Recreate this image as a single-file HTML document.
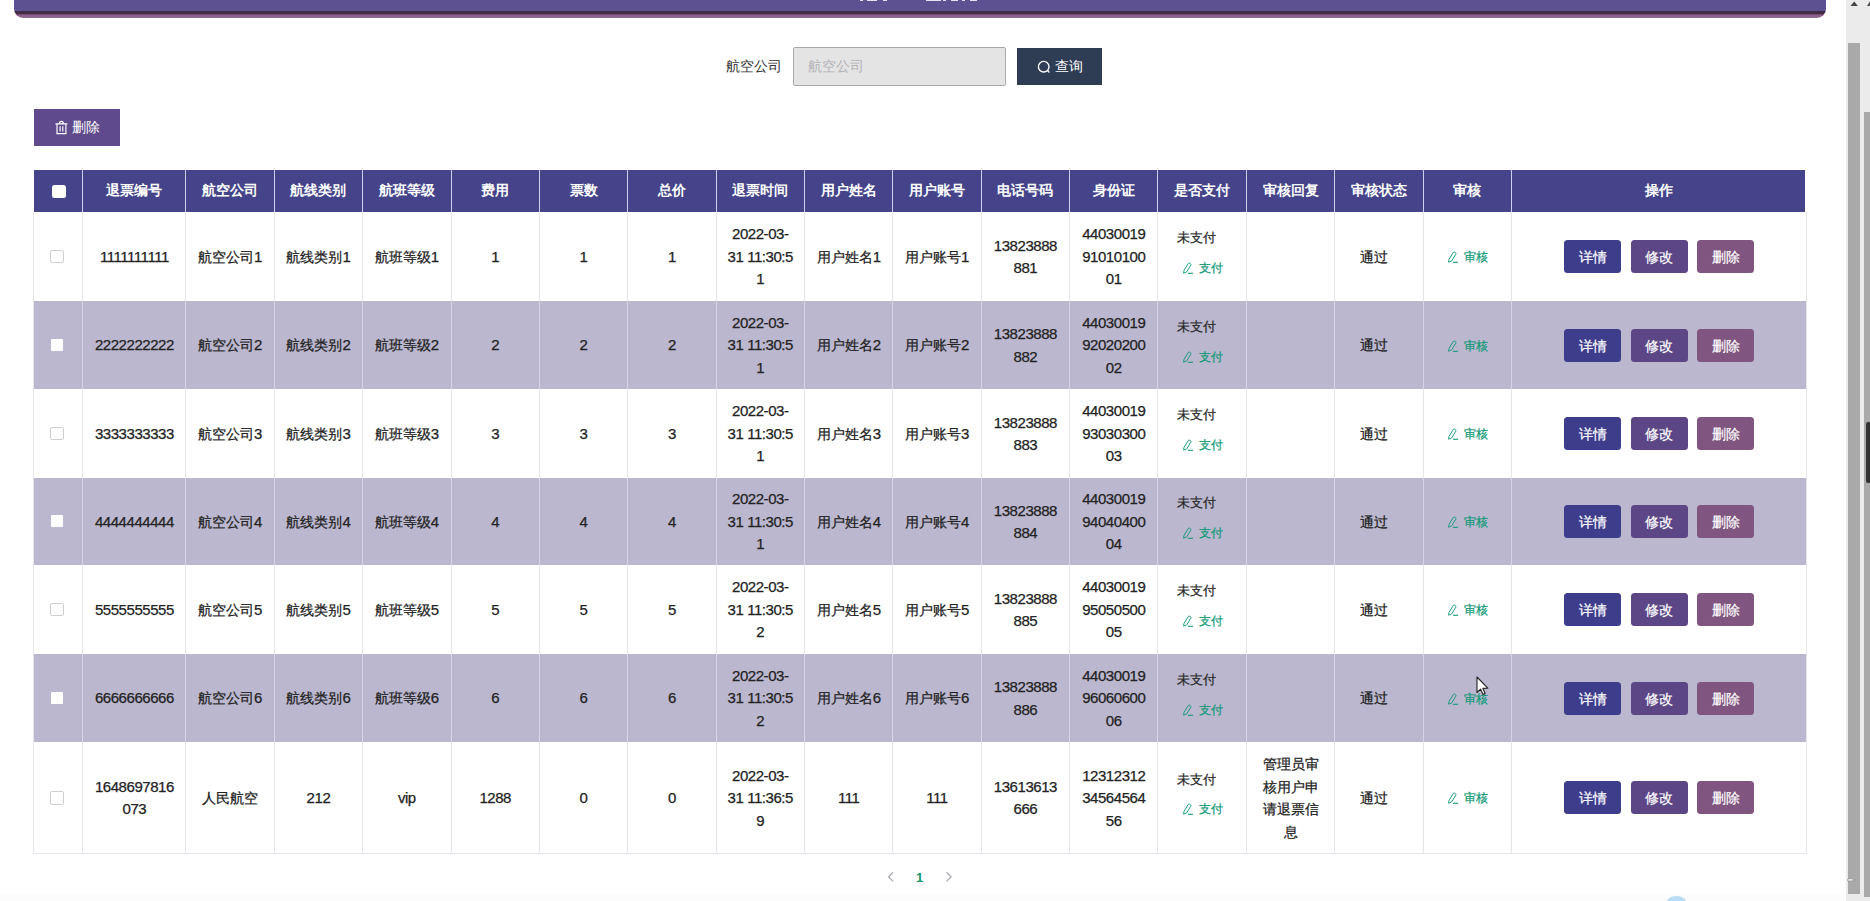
<!DOCTYPE html>
<html><head><meta charset="utf-8"><style>
html,body{margin:0;padding:0;}
body{width:1870px;height:901px;overflow:hidden;position:relative;background:#fff;font-family:"Liberation Sans", sans-serif;}
.t{position:absolute;text-align:center;font-size:14.2px;line-height:22.5px;color:#222;white-space:nowrap;-webkit-text-stroke-width:0.25px;}
.d{font-size:15px;letter-spacing:-0.44px;}
.btn{position:absolute;width:57px;height:33px;border-radius:3.5px;color:#fff;font-size:13.6px;line-height:35px;text-align:center;font-weight:500;-webkit-text-stroke-width:0.2px;}
</style></head><body>
<div style="position:absolute;left:14px;top:0;width:1812px;height:17.5px;border-radius:0 0 9px 9px;background:linear-gradient(to bottom,#5d5191 0,#5d5191 10.6px,#3f2c47 11.2px,#452b48 14px,#8b5f8c 14.8px,#8e6a8e 17.5px)"></div>
<div style="position:absolute;left:860px;top:0;width:3px;height:1px;background:#e6e2f2"></div>
<div style="position:absolute;left:867px;top:0;width:10px;height:1px;background:#e6e2f2"></div>
<div style="position:absolute;left:883px;top:0;width:4px;height:1px;background:#e6e2f2"></div>
<div style="position:absolute;left:926px;top:0;width:15px;height:1px;background:#e6e2f2"></div>
<div style="position:absolute;left:943px;top:0;width:3px;height:1px;background:#e6e2f2"></div>
<div style="position:absolute;left:951px;top:0;width:7px;height:1px;background:#e6e2f2"></div>
<div style="position:absolute;left:962px;top:0;width:3px;height:1px;background:#e6e2f2"></div>
<div style="position:absolute;left:970px;top:0;width:7px;height:1px;background:#e6e2f2"></div>

<div style="position:absolute;left:726px;top:55.55px;font-size:13.8px;line-height:22.5px;color:#333;white-space:nowrap">航空公司</div>
<div style="position:absolute;left:793px;top:47px;width:211px;height:37px;border:1px solid #a9a9a9;border-radius:2px;background:#e4e4e4"></div>
<div style="position:absolute;left:808px;top:55.55px;font-size:13.8px;line-height:22.5px;color:#b3b3b8;white-space:nowrap">航空公司</div>
<div style="position:absolute;left:1017px;top:48px;width:85px;height:37px;background:#2e3c54"></div>
<svg width="14" height="14" viewBox="0 0 14 14" style="position:absolute;left:1036.5px;top:59.5px"><circle cx="6.7" cy="6.7" r="5.3" fill="none" stroke="#fff" stroke-width="1.35"/><path d="M10.5 10.5 L12.4 12.4" stroke="#fff" stroke-width="1.35"/></svg>
<div style="position:absolute;left:1055px;top:56.25px;font-size:13.8px;line-height:22.5px;color:#fff;white-space:nowrap">查询</div>

<div style="position:absolute;left:34px;top:109px;width:86px;height:37px;background:#5e4a8d"></div>
<svg width="15" height="16" viewBox="0 0 15 16" style="position:absolute;left:53.5px;top:119.5px"><path d="M1.4 3.9 H13.4 M5.4 3.9 Q5.4 1.3 7.4 1.3 Q9.4 1.3 9.4 3.9 M3 3.9 V13.6 H11.9 V3.9 M6.1 6.2 V11.4 M8.8 6.2 V11.4" fill="none" stroke="#fff" stroke-width="1.15"/></svg>
<div style="position:absolute;left:72px;top:116.55px;font-size:13.5px;line-height:22.5px;color:#fff;white-space:nowrap">删除</div>

<div style="position:absolute;left:0;top:894px;width:1846px;height:7px;background:#fcfcfc"></div>
<div style="position:absolute;left:34px;top:170px;width:1771px;height:42px;background:#45448a"></div>
<div style="position:absolute;left:82px;top:170px;width:1px;height:42px;background:#cdcef0"></div>
<div style="position:absolute;left:185px;top:170px;width:1px;height:42px;background:#cdcef0"></div>
<div style="position:absolute;left:274px;top:170px;width:1px;height:42px;background:#cdcef0"></div>
<div style="position:absolute;left:362px;top:170px;width:1px;height:42px;background:#cdcef0"></div>
<div style="position:absolute;left:451px;top:170px;width:1px;height:42px;background:#cdcef0"></div>
<div style="position:absolute;left:539px;top:170px;width:1px;height:42px;background:#cdcef0"></div>
<div style="position:absolute;left:627px;top:170px;width:1px;height:42px;background:#cdcef0"></div>
<div style="position:absolute;left:716px;top:170px;width:1px;height:42px;background:#cdcef0"></div>
<div style="position:absolute;left:804px;top:170px;width:1px;height:42px;background:#cdcef0"></div>
<div style="position:absolute;left:892px;top:170px;width:1px;height:42px;background:#cdcef0"></div>
<div style="position:absolute;left:981px;top:170px;width:1px;height:42px;background:#cdcef0"></div>
<div style="position:absolute;left:1069px;top:170px;width:1px;height:42px;background:#cdcef0"></div>
<div style="position:absolute;left:1157px;top:170px;width:1px;height:42px;background:#cdcef0"></div>
<div style="position:absolute;left:1246px;top:170px;width:1px;height:42px;background:#cdcef0"></div>
<div style="position:absolute;left:1334px;top:170px;width:1px;height:42px;background:#cdcef0"></div>
<div style="position:absolute;left:1423px;top:170px;width:1px;height:42px;background:#cdcef0"></div>
<div style="position:absolute;left:1511px;top:170px;width:1px;height:42px;background:#cdcef0"></div>
<div style="position:absolute;left:52px;top:184.5px;width:13.5px;height:13.5px;background:#fff;border-radius:2.5px"></div>
<div class="t" style="left:82.90px;top:180.35px;width:103.00px;color:#fff;font-weight:bold;font-size:13.8px;-webkit-text-stroke-width:0">退票编号</div>
<div class="t" style="left:185.90px;top:180.35px;width:88.37px;color:#fff;font-weight:bold;font-size:13.8px;-webkit-text-stroke-width:0">航空公司</div>
<div class="t" style="left:274.27px;top:180.35px;width:88.37px;color:#fff;font-weight:bold;font-size:13.8px;-webkit-text-stroke-width:0">航线类别</div>
<div class="t" style="left:362.64px;top:180.35px;width:88.37px;color:#fff;font-weight:bold;font-size:13.8px;-webkit-text-stroke-width:0">航班等级</div>
<div class="t" style="left:451.01px;top:180.35px;width:88.37px;color:#fff;font-weight:bold;font-size:13.8px;-webkit-text-stroke-width:0">费用</div>
<div class="t" style="left:539.38px;top:180.35px;width:88.37px;color:#fff;font-weight:bold;font-size:13.8px;-webkit-text-stroke-width:0">票数</div>
<div class="t" style="left:627.75px;top:180.35px;width:88.37px;color:#fff;font-weight:bold;font-size:13.8px;-webkit-text-stroke-width:0">总价</div>
<div class="t" style="left:716.12px;top:180.35px;width:88.37px;color:#fff;font-weight:bold;font-size:13.8px;-webkit-text-stroke-width:0">退票时间</div>
<div class="t" style="left:804.49px;top:180.35px;width:88.37px;color:#fff;font-weight:bold;font-size:13.8px;-webkit-text-stroke-width:0">用户姓名</div>
<div class="t" style="left:892.86px;top:180.35px;width:88.37px;color:#fff;font-weight:bold;font-size:13.8px;-webkit-text-stroke-width:0">用户账号</div>
<div class="t" style="left:981.23px;top:180.35px;width:88.37px;color:#fff;font-weight:bold;font-size:13.8px;-webkit-text-stroke-width:0">电话号码</div>
<div class="t" style="left:1069.60px;top:180.35px;width:88.37px;color:#fff;font-weight:bold;font-size:13.8px;-webkit-text-stroke-width:0">身份证</div>
<div class="t" style="left:1157.97px;top:180.35px;width:88.37px;color:#fff;font-weight:bold;font-size:13.8px;-webkit-text-stroke-width:0">是否支付</div>
<div class="t" style="left:1246.34px;top:180.35px;width:88.37px;color:#fff;font-weight:bold;font-size:13.8px;-webkit-text-stroke-width:0">审核回复</div>
<div class="t" style="left:1334.71px;top:180.35px;width:88.37px;color:#fff;font-weight:bold;font-size:13.8px;-webkit-text-stroke-width:0">审核状态</div>
<div class="t" style="left:1423.08px;top:180.35px;width:88.37px;color:#fff;font-weight:bold;font-size:13.8px;-webkit-text-stroke-width:0">审核</div>
<div class="t" style="left:1511.45px;top:180.35px;width:294.55px;color:#fff;font-weight:bold;font-size:13.8px;-webkit-text-stroke-width:0">操作</div>
<div style="position:absolute;left:34px;top:212.00px;width:1772px;height:89.00px;background:#ffffff"></div>
<div style="position:absolute;left:50px;top:249.70px;width:11.6px;height:11.6px;border:1px solid #cfcfcf;border-radius:2px;background:#fff"></div>
<div class="t" style="left:82.90px;top:245.95px;width:103.00px"><span class="d">1111111111</span></div>
<div class="t" style="left:185.90px;top:245.95px;width:88.37px">航空公司<span class="d">1</span></div>
<div class="t" style="left:274.27px;top:245.95px;width:88.37px">航线类别<span class="d">1</span></div>
<div class="t" style="left:362.64px;top:245.95px;width:88.37px">航班等级<span class="d">1</span></div>
<div class="t" style="left:451.01px;top:245.95px;width:88.37px"><span class="d">1</span></div>
<div class="t" style="left:539.38px;top:245.95px;width:88.37px"><span class="d">1</span></div>
<div class="t" style="left:627.75px;top:245.95px;width:88.37px"><span class="d">1</span></div>
<div class="t" style="left:716.12px;top:223.45px;width:88.37px"><span class="d">2022-03-</span><br><span class="d">31 11:30:5</span><br><span class="d">1</span></div>
<div class="t" style="left:804.49px;top:245.95px;width:88.37px">用户姓名<span class="d">1</span></div>
<div class="t" style="left:892.86px;top:245.95px;width:88.37px">用户账号<span class="d">1</span></div>
<div class="t" style="left:981.23px;top:234.70px;width:88.37px"><span class="d">13823888</span><br><span class="d">881</span></div>
<div class="t" style="left:1069.60px;top:223.45px;width:88.37px"><span class="d">44030019</span><br><span class="d">91010100</span><br><span class="d">01</span></div>
<div class="t" style="left:1176.5px;top:227.45px;font-size:13.4px;color:#2a2a2a;text-align:left">未支付</div>
<svg width="12" height="12" viewBox="0 0 12 12" style="position:absolute;left:1181.80px;top:262.00px"><path d="M1.6 11.2 L2 8.4 L6.2 1.6 Q6.9 0.7 7.8 1.2 L8.5 1.7 Q9.3 2.3 8.8 3.2 L4.6 10 Z" fill="none" stroke="#139a78" stroke-width="0.95"/><path d="M5.9 11.3 H11" stroke="#139a78" stroke-width="1.1"/></svg>
<div class="t" style="left:1198.6px;top:257.05px;font-size:11.6px;color:#139a78;text-align:left">支付</div>
<div class="t" style="left:1329.71px;top:245.95px;width:88.37px">通过</div>
<svg width="12" height="12" viewBox="0 0 12 12" style="position:absolute;left:1447.00px;top:251.20px"><path d="M1.6 11.2 L2 8.4 L6.2 1.6 Q6.9 0.7 7.8 1.2 L8.5 1.7 Q9.3 2.3 8.8 3.2 L4.6 10 Z" fill="none" stroke="#139a78" stroke-width="0.95"/><path d="M5.9 11.3 H11" stroke="#139a78" stroke-width="1.1"/></svg>
<div class="t" style="left:1464.3px;top:246.05px;font-size:11.6px;color:#139a78;text-align:left">审核</div>
<div class="btn" style="left:1564px;top:240.00px;background:#3e3d8b">详情</div>
<div class="btn" style="left:1630.5px;top:240.00px;background:#5c4686">修改</div>
<div class="btn" style="left:1697px;top:240.00px;background:#805681">删除</div>
<div style="position:absolute;left:34px;top:301.00px;width:1772px;height:88.00px;background:#bbb7cf"></div>
<div style="position:absolute;left:50.5px;top:338.50px;width:12px;height:12px;background:#fff;border-radius:1px"></div>
<div class="t" style="left:82.90px;top:334.45px;width:103.00px"><span class="d">2222222222</span></div>
<div class="t" style="left:185.90px;top:334.45px;width:88.37px">航空公司<span class="d">2</span></div>
<div class="t" style="left:274.27px;top:334.45px;width:88.37px">航线类别<span class="d">2</span></div>
<div class="t" style="left:362.64px;top:334.45px;width:88.37px">航班等级<span class="d">2</span></div>
<div class="t" style="left:451.01px;top:334.45px;width:88.37px"><span class="d">2</span></div>
<div class="t" style="left:539.38px;top:334.45px;width:88.37px"><span class="d">2</span></div>
<div class="t" style="left:627.75px;top:334.45px;width:88.37px"><span class="d">2</span></div>
<div class="t" style="left:716.12px;top:311.95px;width:88.37px"><span class="d">2022-03-</span><br><span class="d">31 11:30:5</span><br><span class="d">1</span></div>
<div class="t" style="left:804.49px;top:334.45px;width:88.37px">用户姓名<span class="d">2</span></div>
<div class="t" style="left:892.86px;top:334.45px;width:88.37px">用户账号<span class="d">2</span></div>
<div class="t" style="left:981.23px;top:323.20px;width:88.37px"><span class="d">13823888</span><br><span class="d">882</span></div>
<div class="t" style="left:1069.60px;top:311.95px;width:88.37px"><span class="d">44030019</span><br><span class="d">92020200</span><br><span class="d">02</span></div>
<div class="t" style="left:1176.5px;top:315.95px;font-size:13.4px;color:#2a2a2a;text-align:left">未支付</div>
<svg width="12" height="12" viewBox="0 0 12 12" style="position:absolute;left:1181.80px;top:350.50px"><path d="M1.6 11.2 L2 8.4 L6.2 1.6 Q6.9 0.7 7.8 1.2 L8.5 1.7 Q9.3 2.3 8.8 3.2 L4.6 10 Z" fill="none" stroke="#139a78" stroke-width="0.95"/><path d="M5.9 11.3 H11" stroke="#139a78" stroke-width="1.1"/></svg>
<div class="t" style="left:1198.6px;top:345.55px;font-size:11.6px;color:#139a78;text-align:left">支付</div>
<div class="t" style="left:1329.71px;top:334.45px;width:88.37px">通过</div>
<svg width="12" height="12" viewBox="0 0 12 12" style="position:absolute;left:1447.00px;top:339.70px"><path d="M1.6 11.2 L2 8.4 L6.2 1.6 Q6.9 0.7 7.8 1.2 L8.5 1.7 Q9.3 2.3 8.8 3.2 L4.6 10 Z" fill="none" stroke="#139a78" stroke-width="0.95"/><path d="M5.9 11.3 H11" stroke="#139a78" stroke-width="1.1"/></svg>
<div class="t" style="left:1464.3px;top:334.55px;font-size:11.6px;color:#139a78;text-align:left">审核</div>
<div class="btn" style="left:1564px;top:328.50px;background:#3e3d8b">详情</div>
<div class="btn" style="left:1630.5px;top:328.50px;background:#5c4686">修改</div>
<div class="btn" style="left:1697px;top:328.50px;background:#805681">删除</div>
<div style="position:absolute;left:34px;top:389.00px;width:1772px;height:89.00px;background:#ffffff"></div>
<div style="position:absolute;left:50px;top:426.70px;width:11.6px;height:11.6px;border:1px solid #cfcfcf;border-radius:2px;background:#fff"></div>
<div class="t" style="left:82.90px;top:422.95px;width:103.00px"><span class="d">3333333333</span></div>
<div class="t" style="left:185.90px;top:422.95px;width:88.37px">航空公司<span class="d">3</span></div>
<div class="t" style="left:274.27px;top:422.95px;width:88.37px">航线类别<span class="d">3</span></div>
<div class="t" style="left:362.64px;top:422.95px;width:88.37px">航班等级<span class="d">3</span></div>
<div class="t" style="left:451.01px;top:422.95px;width:88.37px"><span class="d">3</span></div>
<div class="t" style="left:539.38px;top:422.95px;width:88.37px"><span class="d">3</span></div>
<div class="t" style="left:627.75px;top:422.95px;width:88.37px"><span class="d">3</span></div>
<div class="t" style="left:716.12px;top:400.45px;width:88.37px"><span class="d">2022-03-</span><br><span class="d">31 11:30:5</span><br><span class="d">1</span></div>
<div class="t" style="left:804.49px;top:422.95px;width:88.37px">用户姓名<span class="d">3</span></div>
<div class="t" style="left:892.86px;top:422.95px;width:88.37px">用户账号<span class="d">3</span></div>
<div class="t" style="left:981.23px;top:411.70px;width:88.37px"><span class="d">13823888</span><br><span class="d">883</span></div>
<div class="t" style="left:1069.60px;top:400.45px;width:88.37px"><span class="d">44030019</span><br><span class="d">93030300</span><br><span class="d">03</span></div>
<div class="t" style="left:1176.5px;top:404.45px;font-size:13.4px;color:#2a2a2a;text-align:left">未支付</div>
<svg width="12" height="12" viewBox="0 0 12 12" style="position:absolute;left:1181.80px;top:439.00px"><path d="M1.6 11.2 L2 8.4 L6.2 1.6 Q6.9 0.7 7.8 1.2 L8.5 1.7 Q9.3 2.3 8.8 3.2 L4.6 10 Z" fill="none" stroke="#139a78" stroke-width="0.95"/><path d="M5.9 11.3 H11" stroke="#139a78" stroke-width="1.1"/></svg>
<div class="t" style="left:1198.6px;top:434.05px;font-size:11.6px;color:#139a78;text-align:left">支付</div>
<div class="t" style="left:1329.71px;top:422.95px;width:88.37px">通过</div>
<svg width="12" height="12" viewBox="0 0 12 12" style="position:absolute;left:1447.00px;top:428.20px"><path d="M1.6 11.2 L2 8.4 L6.2 1.6 Q6.9 0.7 7.8 1.2 L8.5 1.7 Q9.3 2.3 8.8 3.2 L4.6 10 Z" fill="none" stroke="#139a78" stroke-width="0.95"/><path d="M5.9 11.3 H11" stroke="#139a78" stroke-width="1.1"/></svg>
<div class="t" style="left:1464.3px;top:423.05px;font-size:11.6px;color:#139a78;text-align:left">审核</div>
<div class="btn" style="left:1564px;top:417.00px;background:#3e3d8b">详情</div>
<div class="btn" style="left:1630.5px;top:417.00px;background:#5c4686">修改</div>
<div class="btn" style="left:1697px;top:417.00px;background:#805681">删除</div>
<div style="position:absolute;left:34px;top:478.00px;width:1772px;height:87.00px;background:#bbb7cf"></div>
<div style="position:absolute;left:50.5px;top:515.00px;width:12px;height:12px;background:#fff;border-radius:1px"></div>
<div class="t" style="left:82.90px;top:510.95px;width:103.00px"><span class="d">4444444444</span></div>
<div class="t" style="left:185.90px;top:510.95px;width:88.37px">航空公司<span class="d">4</span></div>
<div class="t" style="left:274.27px;top:510.95px;width:88.37px">航线类别<span class="d">4</span></div>
<div class="t" style="left:362.64px;top:510.95px;width:88.37px">航班等级<span class="d">4</span></div>
<div class="t" style="left:451.01px;top:510.95px;width:88.37px"><span class="d">4</span></div>
<div class="t" style="left:539.38px;top:510.95px;width:88.37px"><span class="d">4</span></div>
<div class="t" style="left:627.75px;top:510.95px;width:88.37px"><span class="d">4</span></div>
<div class="t" style="left:716.12px;top:488.45px;width:88.37px"><span class="d">2022-03-</span><br><span class="d">31 11:30:5</span><br><span class="d">1</span></div>
<div class="t" style="left:804.49px;top:510.95px;width:88.37px">用户姓名<span class="d">4</span></div>
<div class="t" style="left:892.86px;top:510.95px;width:88.37px">用户账号<span class="d">4</span></div>
<div class="t" style="left:981.23px;top:499.70px;width:88.37px"><span class="d">13823888</span><br><span class="d">884</span></div>
<div class="t" style="left:1069.60px;top:488.45px;width:88.37px"><span class="d">44030019</span><br><span class="d">94040400</span><br><span class="d">04</span></div>
<div class="t" style="left:1176.5px;top:492.45px;font-size:13.4px;color:#2a2a2a;text-align:left">未支付</div>
<svg width="12" height="12" viewBox="0 0 12 12" style="position:absolute;left:1181.80px;top:527.00px"><path d="M1.6 11.2 L2 8.4 L6.2 1.6 Q6.9 0.7 7.8 1.2 L8.5 1.7 Q9.3 2.3 8.8 3.2 L4.6 10 Z" fill="none" stroke="#139a78" stroke-width="0.95"/><path d="M5.9 11.3 H11" stroke="#139a78" stroke-width="1.1"/></svg>
<div class="t" style="left:1198.6px;top:522.05px;font-size:11.6px;color:#139a78;text-align:left">支付</div>
<div class="t" style="left:1329.71px;top:510.95px;width:88.37px">通过</div>
<svg width="12" height="12" viewBox="0 0 12 12" style="position:absolute;left:1447.00px;top:516.20px"><path d="M1.6 11.2 L2 8.4 L6.2 1.6 Q6.9 0.7 7.8 1.2 L8.5 1.7 Q9.3 2.3 8.8 3.2 L4.6 10 Z" fill="none" stroke="#139a78" stroke-width="0.95"/><path d="M5.9 11.3 H11" stroke="#139a78" stroke-width="1.1"/></svg>
<div class="t" style="left:1464.3px;top:511.05px;font-size:11.6px;color:#139a78;text-align:left">审核</div>
<div class="btn" style="left:1564px;top:505.00px;background:#3e3d8b">详情</div>
<div class="btn" style="left:1630.5px;top:505.00px;background:#5c4686">修改</div>
<div class="btn" style="left:1697px;top:505.00px;background:#805681">删除</div>
<div style="position:absolute;left:34px;top:565.00px;width:1772px;height:89.00px;background:#ffffff"></div>
<div style="position:absolute;left:50px;top:602.70px;width:11.6px;height:11.6px;border:1px solid #cfcfcf;border-radius:2px;background:#fff"></div>
<div class="t" style="left:82.90px;top:598.95px;width:103.00px"><span class="d">5555555555</span></div>
<div class="t" style="left:185.90px;top:598.95px;width:88.37px">航空公司<span class="d">5</span></div>
<div class="t" style="left:274.27px;top:598.95px;width:88.37px">航线类别<span class="d">5</span></div>
<div class="t" style="left:362.64px;top:598.95px;width:88.37px">航班等级<span class="d">5</span></div>
<div class="t" style="left:451.01px;top:598.95px;width:88.37px"><span class="d">5</span></div>
<div class="t" style="left:539.38px;top:598.95px;width:88.37px"><span class="d">5</span></div>
<div class="t" style="left:627.75px;top:598.95px;width:88.37px"><span class="d">5</span></div>
<div class="t" style="left:716.12px;top:576.45px;width:88.37px"><span class="d">2022-03-</span><br><span class="d">31 11:30:5</span><br><span class="d">2</span></div>
<div class="t" style="left:804.49px;top:598.95px;width:88.37px">用户姓名<span class="d">5</span></div>
<div class="t" style="left:892.86px;top:598.95px;width:88.37px">用户账号<span class="d">5</span></div>
<div class="t" style="left:981.23px;top:587.70px;width:88.37px"><span class="d">13823888</span><br><span class="d">885</span></div>
<div class="t" style="left:1069.60px;top:576.45px;width:88.37px"><span class="d">44030019</span><br><span class="d">95050500</span><br><span class="d">05</span></div>
<div class="t" style="left:1176.5px;top:580.45px;font-size:13.4px;color:#2a2a2a;text-align:left">未支付</div>
<svg width="12" height="12" viewBox="0 0 12 12" style="position:absolute;left:1181.80px;top:615.00px"><path d="M1.6 11.2 L2 8.4 L6.2 1.6 Q6.9 0.7 7.8 1.2 L8.5 1.7 Q9.3 2.3 8.8 3.2 L4.6 10 Z" fill="none" stroke="#139a78" stroke-width="0.95"/><path d="M5.9 11.3 H11" stroke="#139a78" stroke-width="1.1"/></svg>
<div class="t" style="left:1198.6px;top:610.05px;font-size:11.6px;color:#139a78;text-align:left">支付</div>
<div class="t" style="left:1329.71px;top:598.95px;width:88.37px">通过</div>
<svg width="12" height="12" viewBox="0 0 12 12" style="position:absolute;left:1447.00px;top:604.20px"><path d="M1.6 11.2 L2 8.4 L6.2 1.6 Q6.9 0.7 7.8 1.2 L8.5 1.7 Q9.3 2.3 8.8 3.2 L4.6 10 Z" fill="none" stroke="#139a78" stroke-width="0.95"/><path d="M5.9 11.3 H11" stroke="#139a78" stroke-width="1.1"/></svg>
<div class="t" style="left:1464.3px;top:599.05px;font-size:11.6px;color:#139a78;text-align:left">审核</div>
<div class="btn" style="left:1564px;top:593.00px;background:#3e3d8b">详情</div>
<div class="btn" style="left:1630.5px;top:593.00px;background:#5c4686">修改</div>
<div class="btn" style="left:1697px;top:593.00px;background:#805681">删除</div>
<div style="position:absolute;left:34px;top:654.00px;width:1772px;height:88.00px;background:#bbb7cf"></div>
<div style="position:absolute;left:50.5px;top:691.50px;width:12px;height:12px;background:#fff;border-radius:1px"></div>
<div class="t" style="left:82.90px;top:687.45px;width:103.00px"><span class="d">6666666666</span></div>
<div class="t" style="left:185.90px;top:687.45px;width:88.37px">航空公司<span class="d">6</span></div>
<div class="t" style="left:274.27px;top:687.45px;width:88.37px">航线类别<span class="d">6</span></div>
<div class="t" style="left:362.64px;top:687.45px;width:88.37px">航班等级<span class="d">6</span></div>
<div class="t" style="left:451.01px;top:687.45px;width:88.37px"><span class="d">6</span></div>
<div class="t" style="left:539.38px;top:687.45px;width:88.37px"><span class="d">6</span></div>
<div class="t" style="left:627.75px;top:687.45px;width:88.37px"><span class="d">6</span></div>
<div class="t" style="left:716.12px;top:664.95px;width:88.37px"><span class="d">2022-03-</span><br><span class="d">31 11:30:5</span><br><span class="d">2</span></div>
<div class="t" style="left:804.49px;top:687.45px;width:88.37px">用户姓名<span class="d">6</span></div>
<div class="t" style="left:892.86px;top:687.45px;width:88.37px">用户账号<span class="d">6</span></div>
<div class="t" style="left:981.23px;top:676.20px;width:88.37px"><span class="d">13823888</span><br><span class="d">886</span></div>
<div class="t" style="left:1069.60px;top:664.95px;width:88.37px"><span class="d">44030019</span><br><span class="d">96060600</span><br><span class="d">06</span></div>
<div class="t" style="left:1176.5px;top:668.95px;font-size:13.4px;color:#2a2a2a;text-align:left">未支付</div>
<svg width="12" height="12" viewBox="0 0 12 12" style="position:absolute;left:1181.80px;top:703.50px"><path d="M1.6 11.2 L2 8.4 L6.2 1.6 Q6.9 0.7 7.8 1.2 L8.5 1.7 Q9.3 2.3 8.8 3.2 L4.6 10 Z" fill="none" stroke="#139a78" stroke-width="0.95"/><path d="M5.9 11.3 H11" stroke="#139a78" stroke-width="1.1"/></svg>
<div class="t" style="left:1198.6px;top:698.55px;font-size:11.6px;color:#139a78;text-align:left">支付</div>
<div class="t" style="left:1329.71px;top:687.45px;width:88.37px">通过</div>
<svg width="12" height="12" viewBox="0 0 12 12" style="position:absolute;left:1447.00px;top:692.70px"><path d="M1.6 11.2 L2 8.4 L6.2 1.6 Q6.9 0.7 7.8 1.2 L8.5 1.7 Q9.3 2.3 8.8 3.2 L4.6 10 Z" fill="none" stroke="#139a78" stroke-width="0.95"/><path d="M5.9 11.3 H11" stroke="#139a78" stroke-width="1.1"/></svg>
<div class="t" style="left:1464.3px;top:687.55px;font-size:11.6px;color:#139a78;text-align:left">审核</div>
<div class="btn" style="left:1564px;top:681.50px;background:#3e3d8b">详情</div>
<div class="btn" style="left:1630.5px;top:681.50px;background:#5c4686">修改</div>
<div class="btn" style="left:1697px;top:681.50px;background:#805681">删除</div>
<div style="position:absolute;left:34px;top:742.00px;width:1772px;height:111.50px;background:#ffffff"></div>
<div style="position:absolute;left:50px;top:790.95px;width:11.6px;height:11.6px;border:1px solid #cfcfcf;border-radius:2px;background:#fff"></div>
<div class="t" style="left:82.90px;top:775.95px;width:103.00px"><span class="d">1648697816</span><br><span class="d">073</span></div>
<div class="t" style="left:185.90px;top:787.20px;width:88.37px">人民航空</div>
<div class="t" style="left:274.27px;top:787.20px;width:88.37px"><span class="d">212</span></div>
<div class="t" style="left:362.64px;top:787.20px;width:88.37px"><span class="d">vip</span></div>
<div class="t" style="left:451.01px;top:787.20px;width:88.37px"><span class="d">1288</span></div>
<div class="t" style="left:539.38px;top:787.20px;width:88.37px"><span class="d">0</span></div>
<div class="t" style="left:627.75px;top:787.20px;width:88.37px"><span class="d">0</span></div>
<div class="t" style="left:716.12px;top:764.70px;width:88.37px"><span class="d">2022-03-</span><br><span class="d">31 11:36:5</span><br><span class="d">9</span></div>
<div class="t" style="left:804.49px;top:787.20px;width:88.37px"><span class="d">111</span></div>
<div class="t" style="left:892.86px;top:787.20px;width:88.37px"><span class="d">111</span></div>
<div class="t" style="left:981.23px;top:775.95px;width:88.37px"><span class="d">13613613</span><br><span class="d">666</span></div>
<div class="t" style="left:1069.60px;top:764.70px;width:88.37px"><span class="d">12312312</span><br><span class="d">34564564</span><br><span class="d">56</span></div>
<div class="t" style="left:1176.5px;top:768.70px;font-size:13.4px;color:#2a2a2a;text-align:left">未支付</div>
<svg width="12" height="12" viewBox="0 0 12 12" style="position:absolute;left:1181.80px;top:803.25px"><path d="M1.6 11.2 L2 8.4 L6.2 1.6 Q6.9 0.7 7.8 1.2 L8.5 1.7 Q9.3 2.3 8.8 3.2 L4.6 10 Z" fill="none" stroke="#139a78" stroke-width="0.95"/><path d="M5.9 11.3 H11" stroke="#139a78" stroke-width="1.1"/></svg>
<div class="t" style="left:1198.6px;top:798.30px;font-size:11.6px;color:#139a78;text-align:left">支付</div>
<div class="t" style="left:1246.34px;top:753.45px;width:88.37px">管理员审<br>核用户申<br>请退票信<br>息</div>
<div class="t" style="left:1329.71px;top:787.20px;width:88.37px">通过</div>
<svg width="12" height="12" viewBox="0 0 12 12" style="position:absolute;left:1447.00px;top:792.45px"><path d="M1.6 11.2 L2 8.4 L6.2 1.6 Q6.9 0.7 7.8 1.2 L8.5 1.7 Q9.3 2.3 8.8 3.2 L4.6 10 Z" fill="none" stroke="#139a78" stroke-width="0.95"/><path d="M5.9 11.3 H11" stroke="#139a78" stroke-width="1.1"/></svg>
<div class="t" style="left:1464.3px;top:787.30px;font-size:11.6px;color:#139a78;text-align:left">审核</div>
<div class="btn" style="left:1564px;top:781.25px;background:#3e3d8b">详情</div>
<div class="btn" style="left:1630.5px;top:781.25px;background:#5c4686">修改</div>
<div class="btn" style="left:1697px;top:781.25px;background:#805681">删除</div>
<div style="position:absolute;left:82px;top:212px;width:1px;height:89.00px;background:#e4e4e9"></div>
<div style="position:absolute;left:82px;top:301px;width:1px;height:88.00px;background:#d6d4e7"></div>
<div style="position:absolute;left:82px;top:389px;width:1px;height:89.00px;background:#e4e4e9"></div>
<div style="position:absolute;left:82px;top:478px;width:1px;height:87.00px;background:#d6d4e7"></div>
<div style="position:absolute;left:82px;top:565px;width:1px;height:89.00px;background:#e4e4e9"></div>
<div style="position:absolute;left:82px;top:654px;width:1px;height:88.00px;background:#d6d4e7"></div>
<div style="position:absolute;left:82px;top:742px;width:1px;height:111.50px;background:#e4e4e9"></div>
<div style="position:absolute;left:185px;top:212px;width:1px;height:89.00px;background:#e4e4e9"></div>
<div style="position:absolute;left:185px;top:301px;width:1px;height:88.00px;background:#d6d4e7"></div>
<div style="position:absolute;left:185px;top:389px;width:1px;height:89.00px;background:#e4e4e9"></div>
<div style="position:absolute;left:185px;top:478px;width:1px;height:87.00px;background:#d6d4e7"></div>
<div style="position:absolute;left:185px;top:565px;width:1px;height:89.00px;background:#e4e4e9"></div>
<div style="position:absolute;left:185px;top:654px;width:1px;height:88.00px;background:#d6d4e7"></div>
<div style="position:absolute;left:185px;top:742px;width:1px;height:111.50px;background:#e4e4e9"></div>
<div style="position:absolute;left:274px;top:212px;width:1px;height:89.00px;background:#e4e4e9"></div>
<div style="position:absolute;left:274px;top:301px;width:1px;height:88.00px;background:#d6d4e7"></div>
<div style="position:absolute;left:274px;top:389px;width:1px;height:89.00px;background:#e4e4e9"></div>
<div style="position:absolute;left:274px;top:478px;width:1px;height:87.00px;background:#d6d4e7"></div>
<div style="position:absolute;left:274px;top:565px;width:1px;height:89.00px;background:#e4e4e9"></div>
<div style="position:absolute;left:274px;top:654px;width:1px;height:88.00px;background:#d6d4e7"></div>
<div style="position:absolute;left:274px;top:742px;width:1px;height:111.50px;background:#e4e4e9"></div>
<div style="position:absolute;left:362px;top:212px;width:1px;height:89.00px;background:#e4e4e9"></div>
<div style="position:absolute;left:362px;top:301px;width:1px;height:88.00px;background:#d6d4e7"></div>
<div style="position:absolute;left:362px;top:389px;width:1px;height:89.00px;background:#e4e4e9"></div>
<div style="position:absolute;left:362px;top:478px;width:1px;height:87.00px;background:#d6d4e7"></div>
<div style="position:absolute;left:362px;top:565px;width:1px;height:89.00px;background:#e4e4e9"></div>
<div style="position:absolute;left:362px;top:654px;width:1px;height:88.00px;background:#d6d4e7"></div>
<div style="position:absolute;left:362px;top:742px;width:1px;height:111.50px;background:#e4e4e9"></div>
<div style="position:absolute;left:451px;top:212px;width:1px;height:89.00px;background:#e4e4e9"></div>
<div style="position:absolute;left:451px;top:301px;width:1px;height:88.00px;background:#d6d4e7"></div>
<div style="position:absolute;left:451px;top:389px;width:1px;height:89.00px;background:#e4e4e9"></div>
<div style="position:absolute;left:451px;top:478px;width:1px;height:87.00px;background:#d6d4e7"></div>
<div style="position:absolute;left:451px;top:565px;width:1px;height:89.00px;background:#e4e4e9"></div>
<div style="position:absolute;left:451px;top:654px;width:1px;height:88.00px;background:#d6d4e7"></div>
<div style="position:absolute;left:451px;top:742px;width:1px;height:111.50px;background:#e4e4e9"></div>
<div style="position:absolute;left:539px;top:212px;width:1px;height:89.00px;background:#e4e4e9"></div>
<div style="position:absolute;left:539px;top:301px;width:1px;height:88.00px;background:#d6d4e7"></div>
<div style="position:absolute;left:539px;top:389px;width:1px;height:89.00px;background:#e4e4e9"></div>
<div style="position:absolute;left:539px;top:478px;width:1px;height:87.00px;background:#d6d4e7"></div>
<div style="position:absolute;left:539px;top:565px;width:1px;height:89.00px;background:#e4e4e9"></div>
<div style="position:absolute;left:539px;top:654px;width:1px;height:88.00px;background:#d6d4e7"></div>
<div style="position:absolute;left:539px;top:742px;width:1px;height:111.50px;background:#e4e4e9"></div>
<div style="position:absolute;left:627px;top:212px;width:1px;height:89.00px;background:#e4e4e9"></div>
<div style="position:absolute;left:627px;top:301px;width:1px;height:88.00px;background:#d6d4e7"></div>
<div style="position:absolute;left:627px;top:389px;width:1px;height:89.00px;background:#e4e4e9"></div>
<div style="position:absolute;left:627px;top:478px;width:1px;height:87.00px;background:#d6d4e7"></div>
<div style="position:absolute;left:627px;top:565px;width:1px;height:89.00px;background:#e4e4e9"></div>
<div style="position:absolute;left:627px;top:654px;width:1px;height:88.00px;background:#d6d4e7"></div>
<div style="position:absolute;left:627px;top:742px;width:1px;height:111.50px;background:#e4e4e9"></div>
<div style="position:absolute;left:716px;top:212px;width:1px;height:89.00px;background:#e4e4e9"></div>
<div style="position:absolute;left:716px;top:301px;width:1px;height:88.00px;background:#d6d4e7"></div>
<div style="position:absolute;left:716px;top:389px;width:1px;height:89.00px;background:#e4e4e9"></div>
<div style="position:absolute;left:716px;top:478px;width:1px;height:87.00px;background:#d6d4e7"></div>
<div style="position:absolute;left:716px;top:565px;width:1px;height:89.00px;background:#e4e4e9"></div>
<div style="position:absolute;left:716px;top:654px;width:1px;height:88.00px;background:#d6d4e7"></div>
<div style="position:absolute;left:716px;top:742px;width:1px;height:111.50px;background:#e4e4e9"></div>
<div style="position:absolute;left:804px;top:212px;width:1px;height:89.00px;background:#e4e4e9"></div>
<div style="position:absolute;left:804px;top:301px;width:1px;height:88.00px;background:#d6d4e7"></div>
<div style="position:absolute;left:804px;top:389px;width:1px;height:89.00px;background:#e4e4e9"></div>
<div style="position:absolute;left:804px;top:478px;width:1px;height:87.00px;background:#d6d4e7"></div>
<div style="position:absolute;left:804px;top:565px;width:1px;height:89.00px;background:#e4e4e9"></div>
<div style="position:absolute;left:804px;top:654px;width:1px;height:88.00px;background:#d6d4e7"></div>
<div style="position:absolute;left:804px;top:742px;width:1px;height:111.50px;background:#e4e4e9"></div>
<div style="position:absolute;left:892px;top:212px;width:1px;height:89.00px;background:#e4e4e9"></div>
<div style="position:absolute;left:892px;top:301px;width:1px;height:88.00px;background:#d6d4e7"></div>
<div style="position:absolute;left:892px;top:389px;width:1px;height:89.00px;background:#e4e4e9"></div>
<div style="position:absolute;left:892px;top:478px;width:1px;height:87.00px;background:#d6d4e7"></div>
<div style="position:absolute;left:892px;top:565px;width:1px;height:89.00px;background:#e4e4e9"></div>
<div style="position:absolute;left:892px;top:654px;width:1px;height:88.00px;background:#d6d4e7"></div>
<div style="position:absolute;left:892px;top:742px;width:1px;height:111.50px;background:#e4e4e9"></div>
<div style="position:absolute;left:981px;top:212px;width:1px;height:89.00px;background:#e4e4e9"></div>
<div style="position:absolute;left:981px;top:301px;width:1px;height:88.00px;background:#d6d4e7"></div>
<div style="position:absolute;left:981px;top:389px;width:1px;height:89.00px;background:#e4e4e9"></div>
<div style="position:absolute;left:981px;top:478px;width:1px;height:87.00px;background:#d6d4e7"></div>
<div style="position:absolute;left:981px;top:565px;width:1px;height:89.00px;background:#e4e4e9"></div>
<div style="position:absolute;left:981px;top:654px;width:1px;height:88.00px;background:#d6d4e7"></div>
<div style="position:absolute;left:981px;top:742px;width:1px;height:111.50px;background:#e4e4e9"></div>
<div style="position:absolute;left:1069px;top:212px;width:1px;height:89.00px;background:#e4e4e9"></div>
<div style="position:absolute;left:1069px;top:301px;width:1px;height:88.00px;background:#d6d4e7"></div>
<div style="position:absolute;left:1069px;top:389px;width:1px;height:89.00px;background:#e4e4e9"></div>
<div style="position:absolute;left:1069px;top:478px;width:1px;height:87.00px;background:#d6d4e7"></div>
<div style="position:absolute;left:1069px;top:565px;width:1px;height:89.00px;background:#e4e4e9"></div>
<div style="position:absolute;left:1069px;top:654px;width:1px;height:88.00px;background:#d6d4e7"></div>
<div style="position:absolute;left:1069px;top:742px;width:1px;height:111.50px;background:#e4e4e9"></div>
<div style="position:absolute;left:1157px;top:212px;width:1px;height:89.00px;background:#e4e4e9"></div>
<div style="position:absolute;left:1157px;top:301px;width:1px;height:88.00px;background:#d6d4e7"></div>
<div style="position:absolute;left:1157px;top:389px;width:1px;height:89.00px;background:#e4e4e9"></div>
<div style="position:absolute;left:1157px;top:478px;width:1px;height:87.00px;background:#d6d4e7"></div>
<div style="position:absolute;left:1157px;top:565px;width:1px;height:89.00px;background:#e4e4e9"></div>
<div style="position:absolute;left:1157px;top:654px;width:1px;height:88.00px;background:#d6d4e7"></div>
<div style="position:absolute;left:1157px;top:742px;width:1px;height:111.50px;background:#e4e4e9"></div>
<div style="position:absolute;left:1246px;top:212px;width:1px;height:89.00px;background:#e4e4e9"></div>
<div style="position:absolute;left:1246px;top:301px;width:1px;height:88.00px;background:#d6d4e7"></div>
<div style="position:absolute;left:1246px;top:389px;width:1px;height:89.00px;background:#e4e4e9"></div>
<div style="position:absolute;left:1246px;top:478px;width:1px;height:87.00px;background:#d6d4e7"></div>
<div style="position:absolute;left:1246px;top:565px;width:1px;height:89.00px;background:#e4e4e9"></div>
<div style="position:absolute;left:1246px;top:654px;width:1px;height:88.00px;background:#d6d4e7"></div>
<div style="position:absolute;left:1246px;top:742px;width:1px;height:111.50px;background:#e4e4e9"></div>
<div style="position:absolute;left:1334px;top:212px;width:1px;height:89.00px;background:#e4e4e9"></div>
<div style="position:absolute;left:1334px;top:301px;width:1px;height:88.00px;background:#d6d4e7"></div>
<div style="position:absolute;left:1334px;top:389px;width:1px;height:89.00px;background:#e4e4e9"></div>
<div style="position:absolute;left:1334px;top:478px;width:1px;height:87.00px;background:#d6d4e7"></div>
<div style="position:absolute;left:1334px;top:565px;width:1px;height:89.00px;background:#e4e4e9"></div>
<div style="position:absolute;left:1334px;top:654px;width:1px;height:88.00px;background:#d6d4e7"></div>
<div style="position:absolute;left:1334px;top:742px;width:1px;height:111.50px;background:#e4e4e9"></div>
<div style="position:absolute;left:1423px;top:212px;width:1px;height:89.00px;background:#e4e4e9"></div>
<div style="position:absolute;left:1423px;top:301px;width:1px;height:88.00px;background:#d6d4e7"></div>
<div style="position:absolute;left:1423px;top:389px;width:1px;height:89.00px;background:#e4e4e9"></div>
<div style="position:absolute;left:1423px;top:478px;width:1px;height:87.00px;background:#d6d4e7"></div>
<div style="position:absolute;left:1423px;top:565px;width:1px;height:89.00px;background:#e4e4e9"></div>
<div style="position:absolute;left:1423px;top:654px;width:1px;height:88.00px;background:#d6d4e7"></div>
<div style="position:absolute;left:1423px;top:742px;width:1px;height:111.50px;background:#e4e4e9"></div>
<div style="position:absolute;left:1511px;top:212px;width:1px;height:89.00px;background:#e4e4e9"></div>
<div style="position:absolute;left:1511px;top:301px;width:1px;height:88.00px;background:#d6d4e7"></div>
<div style="position:absolute;left:1511px;top:389px;width:1px;height:89.00px;background:#e4e4e9"></div>
<div style="position:absolute;left:1511px;top:478px;width:1px;height:87.00px;background:#d6d4e7"></div>
<div style="position:absolute;left:1511px;top:565px;width:1px;height:89.00px;background:#e4e4e9"></div>
<div style="position:absolute;left:1511px;top:654px;width:1px;height:88.00px;background:#d6d4e7"></div>
<div style="position:absolute;left:1511px;top:742px;width:1px;height:111.50px;background:#e4e4e9"></div>
<div style="position:absolute;left:33px;top:212px;width:1px;height:641.50px;background:#e4e4ea"></div>
<div style="position:absolute;left:1806px;top:212px;width:1px;height:641.50px;background:#e4e4ea"></div>
<div style="position:absolute;left:33px;top:853px;width:1774px;height:1px;background:#e4e4ea"></div>

<svg width="8" height="12" style="position:absolute;left:887px;top:870.5px"><path d="M6 1.2 L1.6 5.8 L6 10.4" fill="none" stroke="#a9a9b8" stroke-width="1.3"/></svg>
<div style="position:absolute;left:916px;top:866.5px;font-size:13px;line-height:22px;font-weight:bold;color:#13966f">1</div>
<svg width="8" height="12" style="position:absolute;left:944.5px;top:870.5px"><path d="M1.6 1.2 L6 5.8 L1.6 10.4" fill="none" stroke="#a9a9b8" stroke-width="1.3"/></svg>

<svg width="14" height="20" viewBox="0 0 14 20" style="position:absolute;left:1475.5px;top:675.5px"><path d="M1 1 V16.5 L4.6 13.2 L7 18.5 L9.2 17.5 L6.9 12.4 L11.8 12.2 Z" fill="#fff" stroke="#222" stroke-width="1.1" stroke-linejoin="round"/></svg>

<div style="position:absolute;left:1846px;top:0;width:24px;height:901px;background:#ebebeb"></div>
<div style="position:absolute;left:1847.5px;top:43px;width:12.5px;height:851px;background:#a9a9a9"></div>
<div style="position:absolute;left:1864px;top:112px;width:6px;height:785px;background:#a9a9a9"></div>
<div style="position:absolute;left:1866px;top:422px;width:4px;height:61px;background:#333;border-radius:2px 0 0 2px"></div>
<svg width="10" height="6" style="position:absolute;left:1849.5px;top:0.5px"><path d="M0.5 5 L4.2 0.5 L7.9 5 Z" fill="#444"/></svg>
<svg width="4" height="6" style="position:absolute;left:1867px;top:0.5px"><path d="M0 5 L3 0.5 L3 5 Z" fill="#444"/></svg>
<svg width="10" height="5" style="position:absolute;left:1846.5px;top:876.5px"><path d="M0.5 2.2 Q4 1 8 3 Q5 4.2 0.5 3.8 Z" fill="#fafafa" stroke="#666" stroke-width="0.4"/></svg>
<div style="position:absolute;left:1667px;top:896px;width:19px;height:12px;border-radius:50%;background:#b6dcf8"></div>
</body></html>
